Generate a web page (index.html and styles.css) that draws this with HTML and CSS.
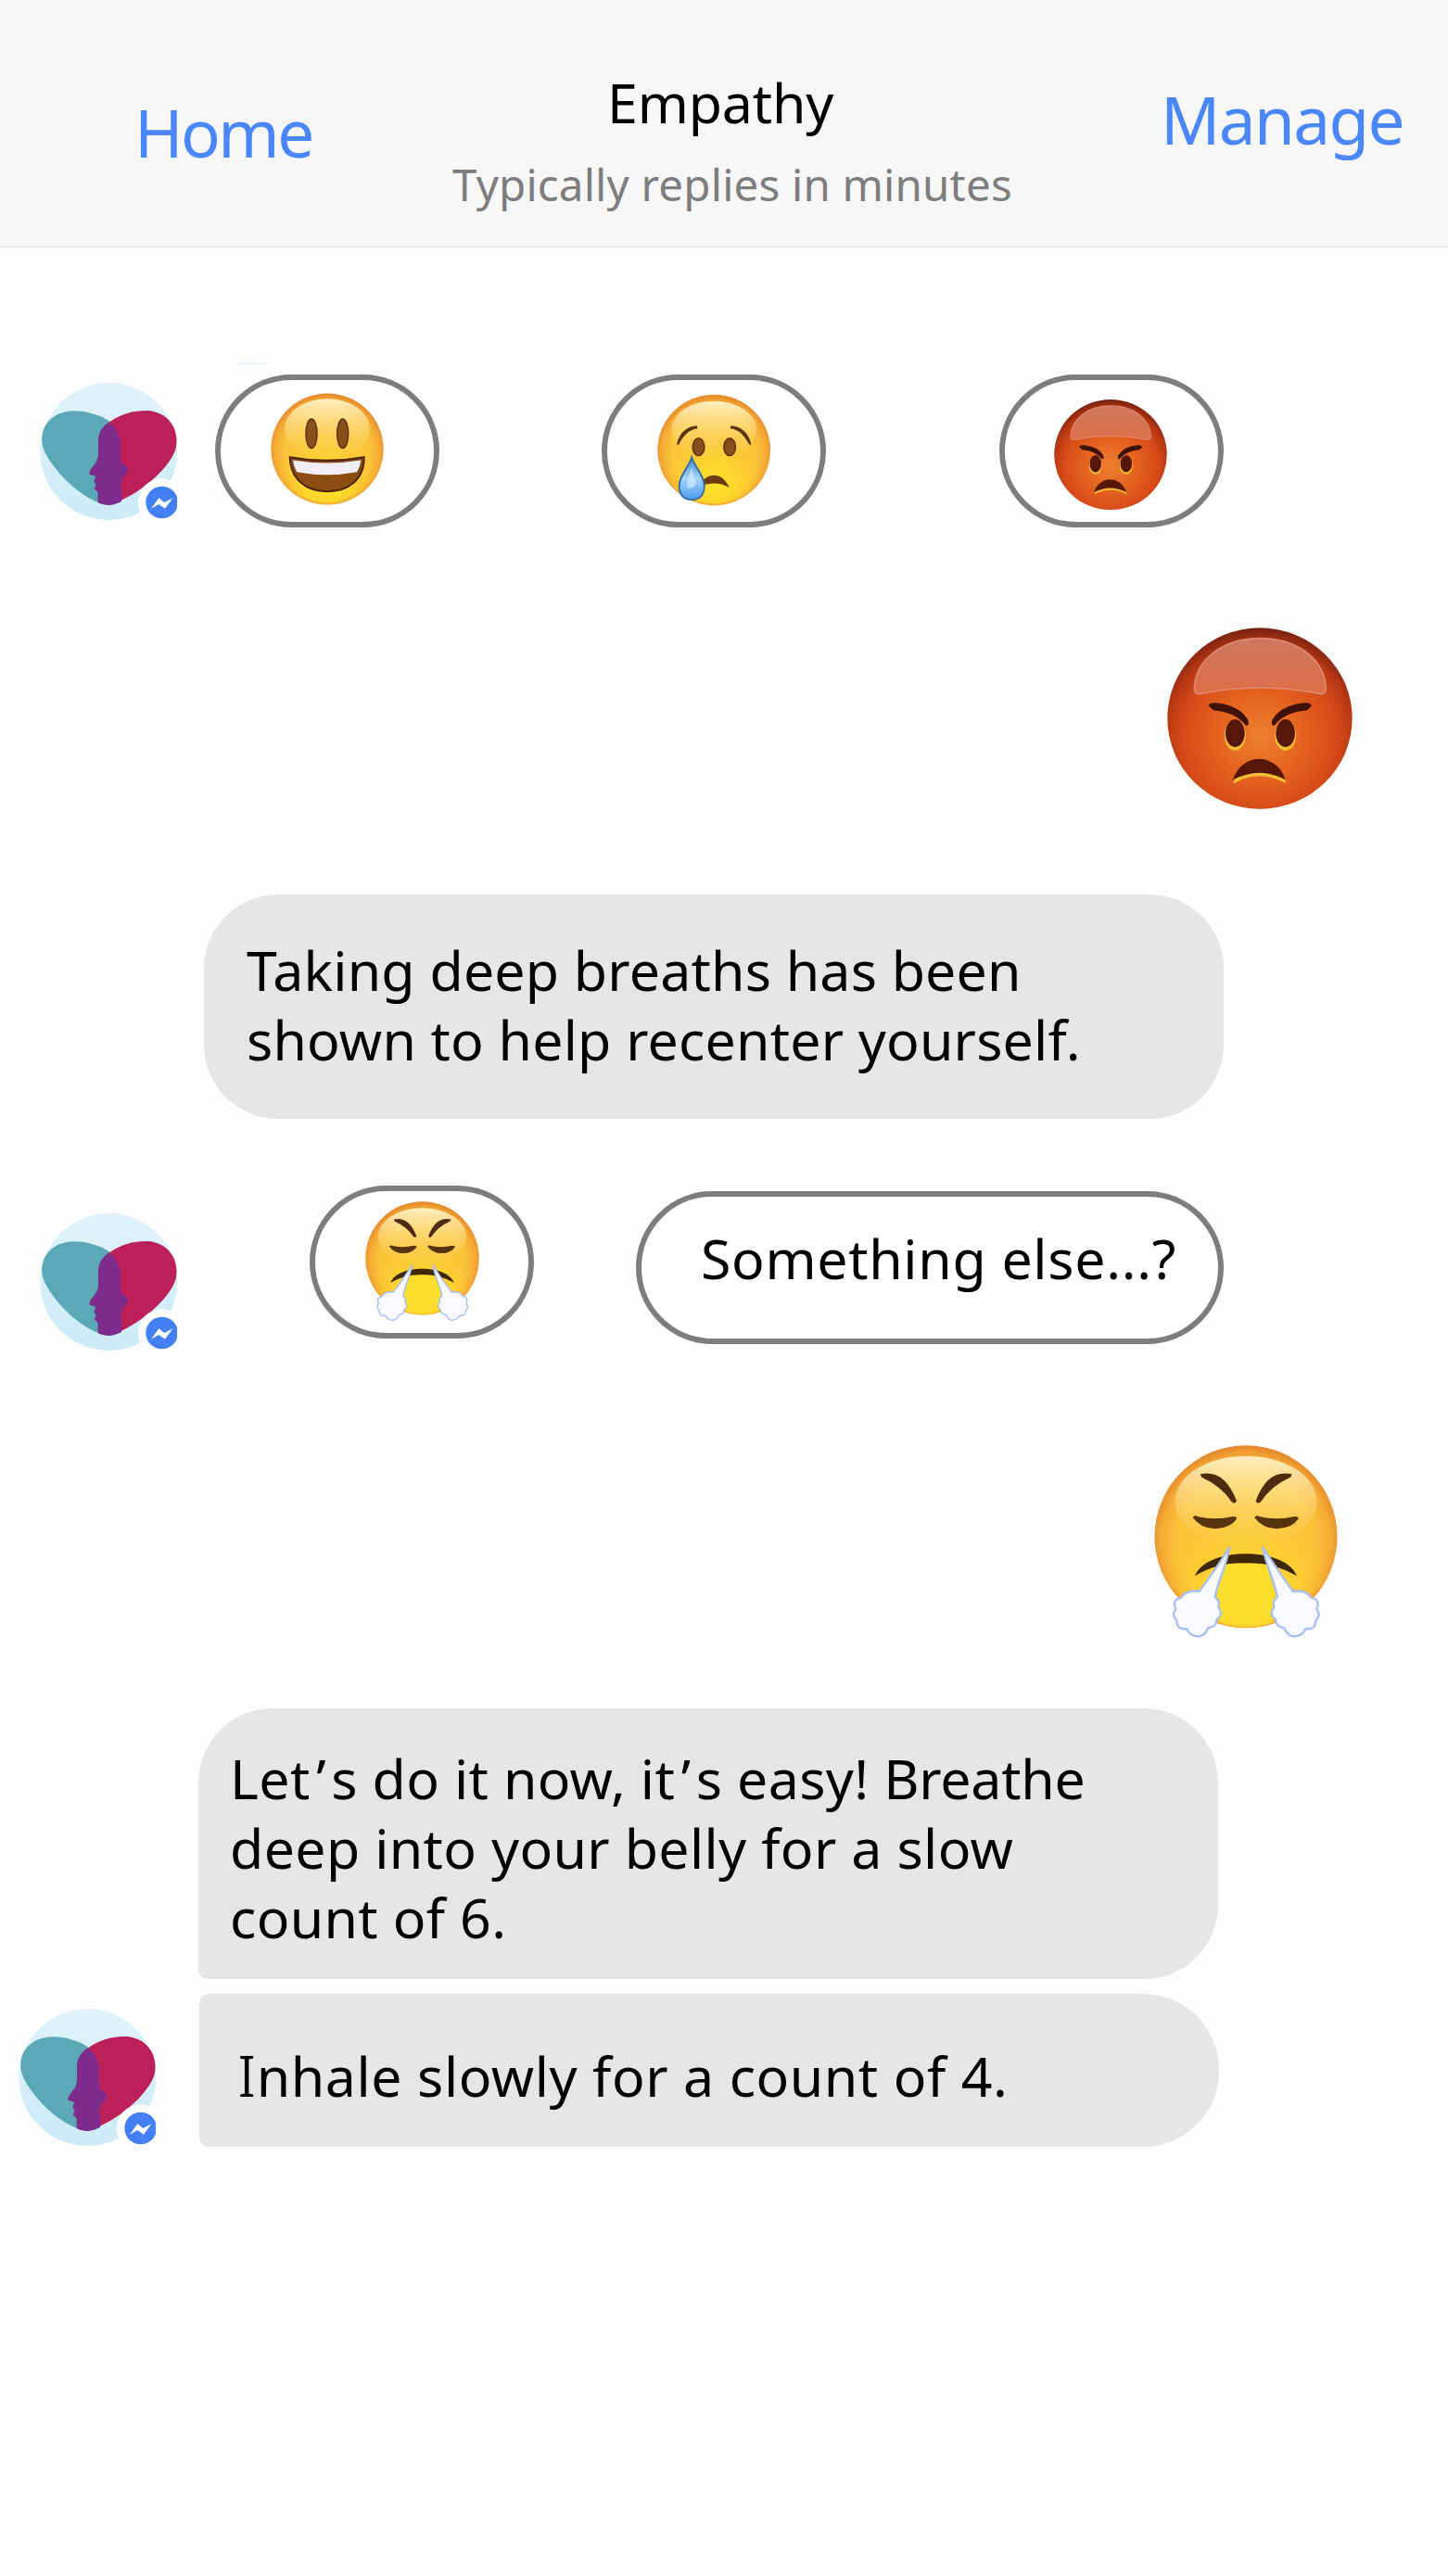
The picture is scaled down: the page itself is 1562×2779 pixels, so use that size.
FILE: index.html
```html
<!DOCTYPE html>
<html lang="en">
<head>
<meta charset="utf-8">
<title>Empathy</title>
<link rel="stylesheet" href="styles.css">
</head>
<body>
<svg class="defs" aria-hidden="true">
  <defs>
    <radialGradient id="yellow" cx=".5" cy=".53" r=".53">
      <stop offset="0" stop-color="#fbc63c"/><stop offset=".7" stop-color="#fbc43a"/><stop offset=".88" stop-color="#f5ab34"/><stop offset="1" stop-color="#e3862c"/>
    </radialGradient>
    <radialGradient id="lemon" cx=".5" cy=".86" r=".5">
      <stop offset="0" stop-color="#ffe528" stop-opacity=".9"/><stop offset=".4" stop-color="#ffe026" stop-opacity=".65"/><stop offset="1" stop-color="#ffd52a" stop-opacity="0"/>
    </radialGradient>
    <linearGradient id="shine" x1="0" y1="0" x2="0" y2="1">
      <stop offset="0" stop-color="#fff3c9" stop-opacity=".95"/><stop offset=".75" stop-color="#ffe28a" stop-opacity=".2"/><stop offset="1" stop-color="#ffe28a" stop-opacity="0"/>
    </linearGradient>
    <radialGradient id="red" cx=".5" cy=".6" r=".6">
      <stop offset="0" stop-color="#ec7f31"/><stop offset=".4" stop-color="#e4621f"/><stop offset=".7" stop-color="#d64a19"/><stop offset=".86" stop-color="#b53713"/><stop offset="1" stop-color="#74200d"/>
    </radialGradient>
    <linearGradient id="redshine" x1="0" y1="0" x2="0" y2="1">
      <stop offset="0" stop-color="#cf7762"/><stop offset="1" stop-color="#dc6f47"/>
    </linearGradient>
    <linearGradient id="tear" x1="0" y1="0" x2="0" y2="1">
      <stop offset="0" stop-color="#3d84cf"/><stop offset=".5" stop-color="#a8d6fb"/><stop offset="1" stop-color="#4b9bef"/>
    </linearGradient>
    <linearGradient id="sky" x1="0" y1="0" x2="0" y2="1">
      <stop offset="0" stop-color="#dff2fb"/><stop offset="1" stop-color="#cdebf6"/>
    </linearGradient>
  </defs>
  <symbol id="avatar" viewBox="68 190 444 444">
    <circle cx="291" cy="412" r="222" fill="url(#sky)"/>
    <path d="M258 578C200 555 125 492 84 414C56 350 92 284 178 281C220 281 265 295 292 314C325 350 340 480 258 578Z" fill="#5ba8b6"/>
    <path d="M290 586C270 500 240 380 292 318C330 288 380 278 420 280C490 288 520 345 508 402C488 470 380 560 290 586Z" fill="#bb2059"/>
    <path d="M257 372C260 346 272 330 292 317C318 336 328 362 328 392V440Q332 454 352 464Q356 474 346 489Q334 492 334 506L328 522L332 536V574Q290 596 256 578V545L244 533L250 520L243 508L249 492L229 486Q225 478 240 460Q258 440 257 420Z" fill="#7d2b8d"/>
    <circle cx="463" cy="577" r="77" fill="#fefefe"/>
    <circle cx="463" cy="577" r="52" fill="#437ff5"/>
    <path d="M428 597L453 563L471 577L498 563L473 597L453 583Z" fill="#fff"/>
  </symbol>
  <symbol id="grin" viewBox="819 220 366 362">
    <ellipse cx="1002" cy="401" rx="182" ry="180" fill="url(#yellow)"/><ellipse cx="1002" cy="401" rx="176" ry="174" fill="url(#lemon)"/>
    <ellipse cx="1002" cy="335" rx="138" ry="97" fill="url(#shine)"/>
    <g fill="#87501a" stroke="#633610" stroke-width="5"><ellipse cx="951" cy="351" rx="18" ry="47"/><ellipse cx="1052" cy="351" rx="18" ry="47"/></g>
    <path d="M881 427Q1000 449 1121 427C1122 500 1070 538 1002 538S884 500 881 427Z" fill="#8b4d12" stroke="#4c240c" stroke-width="6"/>
    <path d="M891 437Q1000 455 1111 437Q1109 458 1098 475Q1000 493 904 475Q893 458 891 437Z" fill="#f1eef5"/>
  </symbol>
  <symbol id="cry" viewBox="208 106 367 362">
    <ellipse cx="392" cy="287" rx="183" ry="180" fill="url(#yellow)"/><ellipse cx="392" cy="287" rx="176" ry="174" fill="url(#lemon)"/>
    <ellipse cx="392" cy="220" rx="138" ry="92" fill="url(#shine)"/>
    <g fill="#87501a" stroke="#633610" stroke-width="5"><ellipse cx="342" cy="277" rx="19" ry="28"/><ellipse cx="443" cy="277" rx="19" ry="28"/></g>
    <path d="M271 269C278 233 305 208 337 208L339 217C313 220 294 237 278 269ZM513 269C506 233 479 208 447 208L445 217C471 220 490 237 506 269Z" fill="#5a3311"/>
    <path d="M345 404C362 360 419 352 442 409C410 391 380 393 345 404Z" fill="#6c3c10"/>
    <path d="M320 311C331 346 361 369 361 405Q359 448 320 448T279 405C279 369 309 346 320 311Z" fill="url(#tear)" stroke="#386fa9" stroke-width="6"/>
    <path d="M320 345Q301 390 306 410Q327 415 333 394Z" fill="#d8f0ff" opacity=".6"/>
  </symbol>
  <symbol id="angry" viewBox="57 52 600 588">
    <ellipse cx="357" cy="346" rx="299" ry="293" fill="url(#red)"/>
    <path d="M145 252C147 154 240 87 358 87S569 154 571 252Q568 270 550 266Q357 228 166 266Q147 270 145 252Z" fill="url(#redshine)" stroke="#df8a70" stroke-width="5"/>
    <g fill="#f4c232" stroke="#f3bd35" stroke-width="7"><ellipse cx="277" cy="401" rx="31" ry="46"/><ellipse cx="440" cy="401" rx="31" ry="46"/><path d="M277 550C306 463 408 463 437 550Q357 508 277 550Z"/></g>
    <g fill="#561608"><ellipse cx="277" cy="394" rx="31" ry="45"/><ellipse cx="440" cy="394" rx="31" ry="45"/>
    <path d="M270 545C298 455 412 455 440 545Q357 500 270 545Z"/></g>
    <path d="M191 305Q193 295 215 296Q290 303 318 350Q325 370 312 369Q278 326 207 320ZM525 305Q522 295 501 296Q426 303 398 350Q391 370 404 369Q438 326 510 320Z" fill="#401208"/>
  </symbol>
  <symbol id="huff" viewBox="73 57 594 628">
    <ellipse cx="370" cy="354" rx="296" ry="296" fill="url(#yellow)"/><ellipse cx="370" cy="354" rx="285" ry="285" fill="url(#lemon)"/>
    <ellipse cx="370" cy="240" rx="230" ry="148" fill="url(#shine)"/>
    <path d="M222 151Q300 133 340 238Q335 250 324 241Q291 191 226 161ZM519 151Q440 133 402 238Q407 250 418 241Q450 191 515 161Z" fill="#4e2b0e"/>
    <path d="M198 292Q202 282 216 289Q270 301 328 288Q343 288 340 296Q320 327 270 328Q225 328 198 292ZM398 292Q402 282 416 289Q470 301 528 288Q543 288 540 296Q520 327 470 328Q425 328 398 292Z" fill="#57340e"/>
    <path d="M205 481C240 385 500 385 535 481Q455 436 370 440Q280 436 205 481Z" fill="#3f2808"/>
    <path d="M299 445Q370 436 442 445L470 545Q440 620 460 630Q370 665 282 630Q300 580 270 550Z" fill="#fcdf2c" opacity=".8"/>
    <g fill="#f8faff" stroke="#a9c0f0" stroke-width="7" stroke-linejoin="round">
      <path id="puff" d="M317 388C307 450 278 500 270 550Q288 562 280 582Q300 602 276 622Q275 648 248 649Q235 681 211 676Q187 675 179 653Q145 656 146 627Q127 605 143 589Q128 559 159 552Q178 524 219 531Q276 454 317 388Z"/>
      <use href="#puff" transform="matrix(-1 0 0 1 742 0)"/>
    </g>
  </symbol>
</svg>
<header class="topbar">
  <a class="home">Home</a>
  <div class="heading"><h1 class="name">Empathy</h1><p class="status">Typically replies in minutes</p></div>
  <a class="manage">Manage</a>
</header>
<main class="chat">
  <div class="trace"></div>
  <section class="row options">
    <svg class="avatar"><use href="#avatar"/></svg>
    <button class="pill p1"><svg class="emoji grin"><use href="#grin"/></svg></button>
    <button class="pill p2"><svg class="emoji cry"><use href="#cry"/></svg></button>
    <button class="pill p3"><svg class="emoji angry"><use href="#angry"/></svg></button>
  </section>
  <section class="sent sent-angry"><svg><use href="#angry"/></svg></section>
  <section class="bubble b1">Taking deep breaths has been<br>shown to help recenter yourself.</section>
  <section class="row options second">
    <svg class="avatar"><use href="#avatar"/></svg>
    <button class="pill p4"><svg class="emoji huff"><use href="#huff"/></svg></button>
    <button class="pill p5">Something else...?</button>
  </section>
  <section class="sent sent-huff"><svg><use href="#huff"/></svg></section>
  <section class="bubble b2">Le<span class="loose">t’</span>s do it now, i<span class="loose">t’</span>s easy! <span class="tight">Breathe</span><br>deep into your belly for a slow<br>count of 6.</section>
  <section class="row last">
    <svg class="avatar"><use href="#avatar"/></svg>
    <div class="bubble b3"><span class="serif-i">I</span>nhale slowly for a count of 4.</div>
  </section>
</main>
</body>
</html>
```
FILE: styles.css
```css
* { box-sizing: border-box; }
body { margin: 0; background: #fefefe; color: #000; font-family: "Noto Sans", sans-serif; }
.defs { position: absolute; width: 0; height: 0; }
.topbar { display: flex; height: 267px; background: #f7f7f7; border-bottom: 1px solid #e3e3e3; }
.home, .manage { color: #4a86fc; font-size: 71px; line-height: 80px; white-space: nowrap; }
.home { width: 488px; padding: 103px 0 0 145px; letter-spacing: -2.6px; }
.manage { padding: 89px 0 0 2px; letter-spacing: -1.6px; }
.heading { width: 762px; padding-top: 70px; }
.name { margin: 0 0 19px 167px; font-size: 59px; line-height: 80px; font-weight: 400; letter-spacing: -.15px; }
.status { margin: 0; font-size: 47.5px; line-height: 60px; letter-spacing: .18px; color: #7d7d7d; white-space: nowrap; }
.chat { display: flex; flex-direction: column; font-size: 59px; line-height: 75px; letter-spacing: .2px; white-space: nowrap; }
.trace { width: 98px; height: 28px; margin: 98px 0 11px 232px; background: linear-gradient(#e2f5fd, #e2f5fd) 23px 100% / 34px 2px no-repeat, radial-gradient(ellipse at 50% 60%, #fffdfb, #fefefe 70%); }
.row { display: flex; align-items: flex-start; }
.avatar { flex: none; width: 148px; height: 148px; margin: 9px 0 0 43px; }
.pill { flex: none; display: flex; justify-content: center; width: 242px; height: 165px; padding: 0; border: 6px solid #7d7d7d; border-radius: 83px; background: #fff; font: inherit; color: inherit; }
.p1 { margin-left: 41px; }
.p2 { margin-left: 175px; }
.p3 { margin-left: 187px; }
.p4 { margin-left: 143px; }
.p5 { margin: 6px 0 0 110px; width: 634px; justify-content: flex-start; padding: 29px 0 0 64px; letter-spacing: .68px; }
.emoji { width: 122px; height: 121px; }
.grin { margin: 14px 0 0 0; }
.cry { margin-top: 15px; }
.angry { margin: 20px 2px 0 0; }
.huff { width: 123px; height: 130px; margin-top: 11px; }
.sent { display: flex; justify-content: flex-end; }
.sent-angry { margin: 108px 103px 92px 0; }
.sent-angry svg { width: 200px; height: 196px; }
.sent-huff { margin: 115px 119px 75px 0; }
.sent-huff svg { width: 198px; height: 209px; }
.bubble { flex: none; width: 1100px; background: #e7e5e6; border-radius: 80px; }
.b1 { height: 242px; margin: 0 0 72px 219.5px; padding: 44px 46.5px; }
.second { height: 165px; }
.second .avatar { margin-top: 30px; }
.b2 { height: 292px; margin-left: 214px; padding: 38px 34px; border-bottom-left-radius: 10px; letter-spacing: .35px; }
.loose { letter-spacing: 5.8px; }
.tight { letter-spacing: -.2px; }
.last { margin-top: 16px; }
.last .avatar { margin: 16px 0 0 20px; }
.b3 { height: 165px; margin-left: 47px; padding: 51px 41px; border-radius: 10px 82px 82px 10px; letter-spacing: .57px; }
.serif-i { font-feature-settings: "aalt"; font-size: 78px; line-height: 0; font-weight: 300; }
```
